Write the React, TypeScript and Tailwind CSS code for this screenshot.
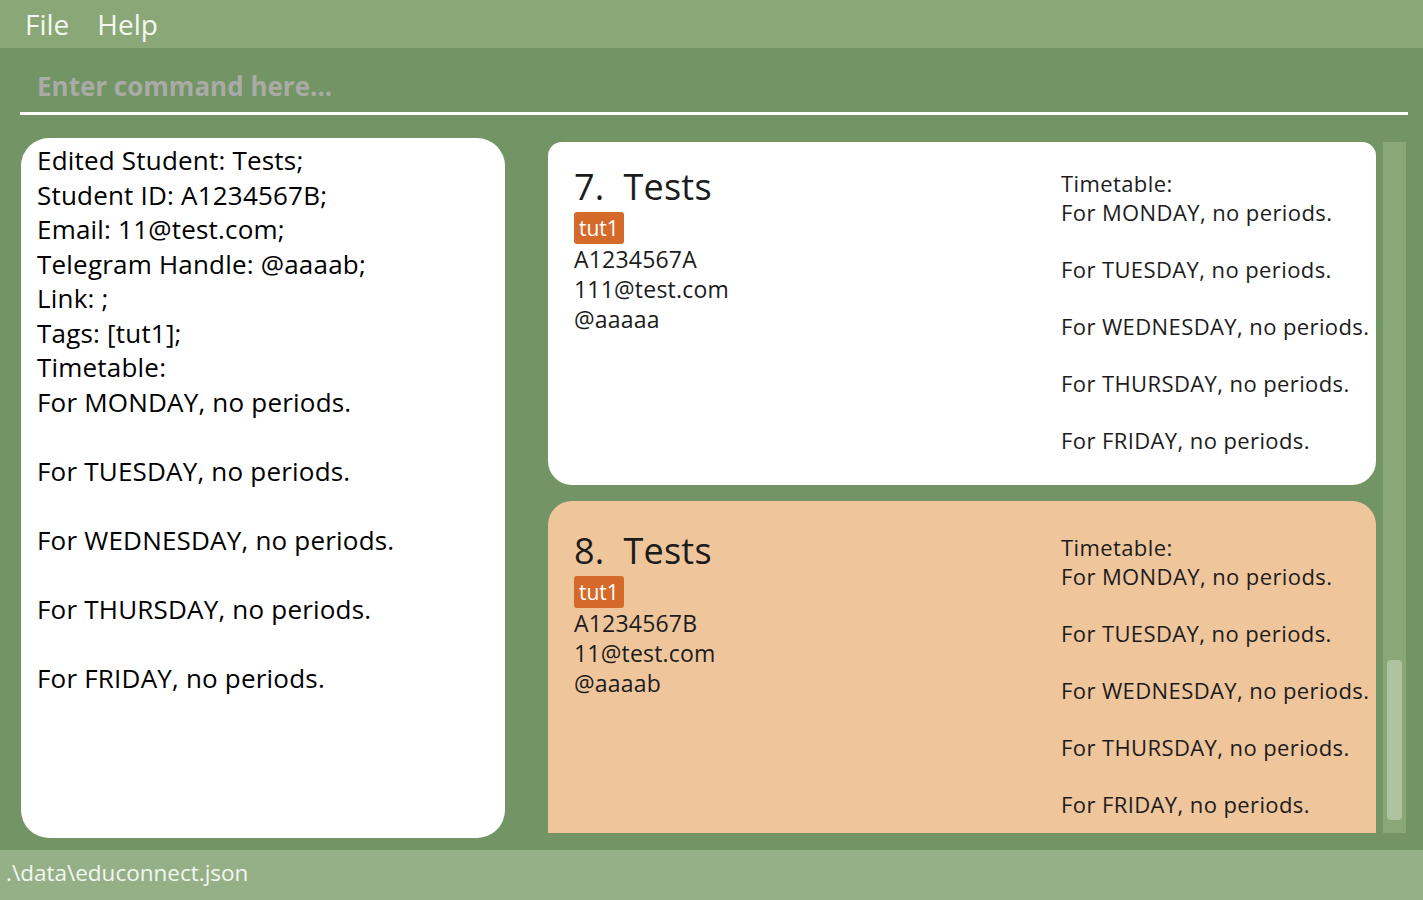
import React from 'react'

const font = { fontFamily: '"Open Sans", "Noto Sans", sans-serif' }

const days = ['MONDAY', 'TUESDAY', 'WEDNESDAY', 'THURSDAY', 'FRIDAY']

interface Student {
  index: number
  name: string
  id: string
  email: string
  handle: string
  tags: string[]
}

const students: Student[] = [
  { index: 7, name: 'Tests', id: 'A1234567A', email: '111@test.com', handle: '@aaaaa', tags: ['tut1'] },
  { index: 8, name: 'Tests', id: 'A1234567B', email: '11@test.com', handle: '@aaaab', tags: ['tut1'] },
]

function Timetable() {
  return (
    <div className="text-[22px] leading-[28.5px] text-[#1c1c1c] tracking-[0.4px]">
      <div>Timetable:</div>
      {days.map((d, i) => (
        <div key={d} className={i > 0 ? 'mt-[28.5px]' : ''}>
          For {d}, no periods.
        </div>
      ))}
    </div>
  )
}

function StudentCard({ s, selected, first }: { s: Student; selected?: boolean; first?: boolean }) {
  return (
    <div
      className={`flex shrink-0 pl-[26px] ${first ? 'h-[343px] rounded-t-[14px] rounded-b-[24px] pt-[21px]' : 'h-[360px] rounded-[24px] pt-[26px]'} ${
        selected ? 'bg-[#efc59c]' : 'bg-white'
      }`}
    >
      <div className="w-[487px] flex flex-col">
        <div className="text-[36px] leading-[48px] text-[#1c1c1c] tracking-[0.2px]">
          {s.index}.&nbsp; {s.name}
        </div>
        <div className="flex gap-2 mt-[1px]">
          {s.tags.map((t) => (
            <span key={t} className="bg-[#d4692a] text-white text-[21px] leading-[32px] px-[5px] rounded-[3px]">
              {t}
            </span>
          ))}
        </div>
        <div className="text-[23px] leading-[30px] text-[#1c1c1c] tracking-[0.2px]">
          <div>{s.id}</div>
          <div>{s.email}</div>
          <div>{s.handle}</div>
        </div>
      </div>
      <div className="pt-[6px]">
        <Timetable />
      </div>
    </div>
  )
}

export default function App() {
  const result = [
    'Edited Student: Tests;',
    'Student ID: A1234567B;',
    'Email: 11@test.com;',
    'Telegram Handle: @aaaab;',
    'Link: ;',
    'Tags: [tut1];',
    'Timetable:',
  ]

  return (
    <div style={font} className="w-[1423px] h-[900px] bg-[#739464] flex flex-col overflow-hidden">
      {/* menu */}
      <div className="h-[48px] bg-[#8aa778] flex items-center gap-[28px] pl-[25px] text-[28px] text-[#f2f7ef]">
        <span>File</span>
        <span>Help</span>
      </div>

      {/* command box */}
      <div className="h-[70px] px-[20px] pt-[18px] flex flex-col">
        <div className="pl-[17px] h-[46px] text-[26px] font-bold text-[#a9aca6] leading-[40px]">
          Enter command here...
        </div>
        <div className="h-[3px] bg-white w-[1388px]" />
      </div>

      {/* main */}
      <div className="flex-1 flex pt-[20px]">
        <div className="ml-[21px] w-[484px] h-[700px] bg-white rounded-[28px] pl-[16px] pt-[5px] text-[26px] leading-[34.5px] text-black tracking-[0.2px]">
          {result.map((l) => (
            <div key={l}>{l}</div>
          ))}
          {days.map((d, i) => (
            <div key={d} className={i > 0 ? 'mt-[34.5px]' : ''}>
              For {d}, no periods.
            </div>
          ))}
        </div>

        <div className="ml-[43px] mt-[4px] h-[691px] w-[828px] overflow-hidden flex flex-col gap-[16px]">
          {students.map((s, i) => (
            <StudentCard key={s.index} s={s} first={i === 0} selected={i === 1} />
          ))}
        </div>

        <div className="ml-[7px] mt-[4px] w-[23px] h-[691px] bg-[#8aa778] flex flex-col justify-end pb-[13px] items-center">
          <div className="w-[15px] h-[160px] bg-[#adc49e] rounded-[4px]" />
        </div>
      </div>

      {/* status bar */}
      <div className="h-[50px] bg-[#95b087] flex items-center pl-[6px] pb-[4px] text-[22.5px] text-[#f2f7ef]">
        .\data\educonnect.json
      </div>
    </div>
  )
}
